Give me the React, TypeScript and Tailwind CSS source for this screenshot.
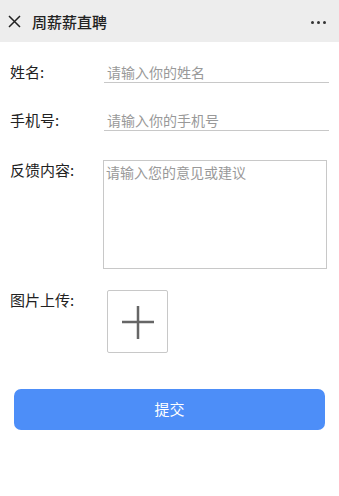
export default function App() {
  const font = { fontFamily: '"Noto Sans CJK SC", "Noto Sans", sans-serif' }

  return (
    <div className="w-[339px] min-h-[496px] bg-white text-[#222]" style={font}>
      {/* Header */}
      <header className="h-[42px] bg-[#ededed] flex items-center pl-[8px] pr-[13px]">
        <svg className="w-[13px] h-[13px]" viewBox="0 0 13 13" fill="none" stroke="#222" strokeWidth={1.5}>
          <path d="M1 1l11 11M12 1L1 12" />
        </svg>
        <span className="ml-[11px] text-[15px] font-medium leading-none">周薪薪直聘</span>
        <div className="ml-auto flex gap-[3px] mt-[2px]">
          <span className="w-[3px] h-[3px] rounded-full bg-[#333]" />
          <span className="w-[3px] h-[3px] rounded-full bg-[#333]" />
          <span className="w-[3px] h-[3px] rounded-full bg-[#333]" />
        </div>
      </header>

      {/* Form */}
      <div className="flex flex-col">
        <div className="flex items-start mt-[20px]">
          <label className="w-[104px] shrink-0 pl-[10px] text-[15px] leading-[20px]">姓名:</label>
          <input
            className="w-[225px] h-[21px] border-b border-[#c8c8c8] text-[14px] leading-[20px] px-[3px] outline-none placeholder:text-[#999]"
            placeholder="请输入你的姓名"
          />
        </div>

        <div className="flex items-start mt-[27px]">
          <label className="w-[104px] shrink-0 pl-[10px] text-[15px] leading-[20px]">手机号:</label>
          <input
            className="w-[225px] h-[21px] border-b border-[#c8c8c8] text-[14px] leading-[20px] px-[3px] outline-none placeholder:text-[#999]"
            placeholder="请输入你的手机号"
          />
        </div>

        <div className="flex items-start mt-[29px]">
          <label className="w-[103px] shrink-0 pl-[10px] text-[15px] leading-[20px]">反馈内容:</label>
          <textarea
            className="w-[224px] h-[109px] border border-[#c8c8c8] text-[14px] leading-[20px] px-[2px] py-[1px] outline-none resize-none placeholder:text-[#999]"
            placeholder="请输入您的意见或建议"
          />
        </div>

        <div className="flex items-start mt-[21px]">
          <label className="w-[107px] shrink-0 pl-[10px] text-[15px] leading-[20px]">图片上传:</label>
          <div className="w-[61px] h-[63px] border border-[#c8c8c8] rounded-[2px] flex items-center justify-center">
            <svg className="w-[34px] h-[34px]" viewBox="0 0 34 34" stroke="#666" strokeWidth={2.5}>
              <path d="M1 17h32M17 1v33" />
            </svg>
          </div>
        </div>

        <button className="mt-[36px] mx-[14px] h-[41px] rounded-[7px] bg-[#4d8ef8] text-white text-[15px]">
          提交
        </button>
      </div>
    </div>
  )
}
